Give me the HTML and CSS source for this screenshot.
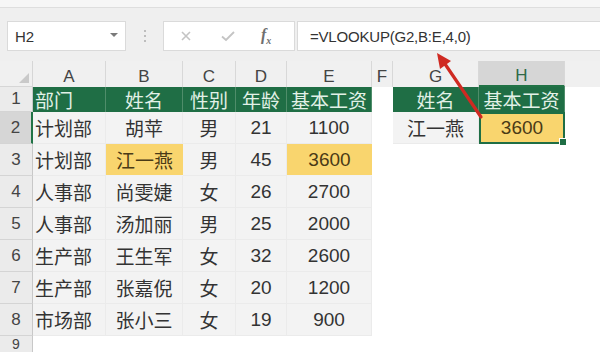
FILE: index.html
```html
<!DOCTYPE html>
<html>
<head>
<meta charset="utf-8">
<link rel="stylesheet" href="styles.css">
</head>
<body>
<div class="app">
  <div class="ribbon"></div>
  <div class="fbar">
    <div class="namebox"><span>H2</span><span class="dd"></span></div>
    <div class="grip"><i></i><i></i><i></i></div>
    <div class="fxbox">
      <svg class="ic" width="14" height="14" viewBox="0 0 14 14"><path d="M3 3 L11 11 M11 3 L3 11" stroke="#c4c4c4" stroke-width="1.6" fill="none"/></svg>
      <svg class="ic" width="16" height="14" viewBox="0 0 16 14"><path d="M2 7.5 L6 11 L14 3" stroke="#c4c4c4" stroke-width="1.8" fill="none"/></svg>
      <span class="fx">f<sub>x</sub></span>
    </div>
    <div class="finput">=VLOOKUP(G2,B:E,4,0)</div>
  </div>
  <div class="sheet">
    <div class="corner"></div>
    <div class="ch">A</div><div class="ch">B</div><div class="ch">C</div><div class="ch">D</div><div class="ch">E</div><div class="ch">F</div><div class="ch">G</div><div class="ch sel">H</div><div class="ch last"></div>

    <div class="rh">1</div>
    <div class="g left">部门</div><div class="g">姓名</div><div class="g">性别</div><div class="g">年龄</div><div class="g">基本工资</div><div class="w"></div><div class="g">姓名</div><div class="g">基本工资</div><div class="w"></div>

    <div class="rh sel">2</div>
    <div class="d left">计划部</div><div class="d">胡苹</div><div class="d">男</div><div class="d">21</div><div class="d">1100</div><div class="w"></div><div class="d">江一燕</div><div class="y cur">3600</div><div class="w"></div>

    <div class="rh">3</div>
    <div class="d left">计划部</div><div class="y">江一燕</div><div class="d">男</div><div class="d">45</div><div class="y">3600</div><div class="w"></div><div class="w"></div><div class="w"></div><div class="w"></div>

    <div class="rh">4</div>
    <div class="d left">人事部</div><div class="d">尚雯婕</div><div class="d">女</div><div class="d">26</div><div class="d">2700</div><div class="w"></div><div class="w"></div><div class="w"></div><div class="w"></div>

    <div class="rh">5</div>
    <div class="d left">人事部</div><div class="d">汤加丽</div><div class="d">男</div><div class="d">25</div><div class="d">2000</div><div class="w"></div><div class="w"></div><div class="w"></div><div class="w"></div>

    <div class="rh">6</div>
    <div class="d left">生产部</div><div class="d">王生军</div><div class="d">女</div><div class="d">32</div><div class="d">2600</div><div class="w"></div><div class="w"></div><div class="w"></div><div class="w"></div>

    <div class="rh">7</div>
    <div class="d left">生产部</div><div class="d">张嘉倪</div><div class="d">女</div><div class="d">20</div><div class="d">1200</div><div class="w"></div><div class="w"></div><div class="w"></div><div class="w"></div>

    <div class="rh">8</div>
    <div class="d left">市场部</div><div class="d">张小三</div><div class="d">女</div><div class="d">19</div><div class="d">900</div><div class="w"></div><div class="w"></div><div class="w"></div><div class="w"></div>

    <div class="rh r9">9</div>
    <div class="w"></div><div class="w"></div><div class="w"></div><div class="w"></div><div class="w"></div><div class="w"></div><div class="w"></div><div class="w"></div><div class="w"></div>
  </div>
  <svg class="arrow" width="600" height="352" viewBox="0 0 600 352">
    <line x1="481" y1="117" x2="445" y2="64" stroke="#cf2a22" stroke-width="3.2" stroke-linecap="round"/>
    <polygon points="437,53 451,61 440,69" fill="#cf2a22"/>
  </svg>
</div>
</body>
</html>
```
FILE: styles.css
```css
* { box-sizing: border-box; }
html, body { margin: 0; padding: 0; background: #fff; }
body { font-family: "Liberation Sans", "Noto Sans CJK SC", sans-serif; color: #333; }

.app { position: relative; width: 600px; height: 352px; overflow: hidden; }

.ribbon {
  height: 8px;
  background: #f6f6f6;
  border-bottom: 1px solid #dedede;
}

.fbar {
  height: 53px;
  background: #efefef;
  display: flex;
  align-items: flex-start;
  padding-top: 13px;
}
.namebox {
  margin-left: 7px;
  width: 119px;
  height: 30px;
  background: #fff;
  border: 1px solid #dadada;
  display: flex;
  align-items: center;
  justify-content: space-between;
  padding: 0 7px 0 7px;
  font-size: 15px;
  color: #333;
}
.dd {
  width: 0; height: 0;
  border-left: 4px solid transparent;
  border-right: 4px solid transparent;
  border-top: 4px solid #7a7a7a;
  margin-top: -2px;
}
.grip {
  width: 37px;
  height: 30px;
  display: flex;
  flex-direction: column;
  align-items: center;
  justify-content: center;
  gap: 3px;
}
.grip i { display: block; width: 2px; height: 2px; background: #bdbdbd; }
.fxbox {
  width: 132px;
  height: 30px;
  background: #fff;
  border: 1px solid #dadada;
  display: flex;
  align-items: center;
  padding-left: 15px;
}
.fxbox .ic:nth-child(1) { margin-right: 27px; }
.fxbox .ic:nth-child(2) { margin-right: 25px; }
.fx {
  font-family: "Liberation Serif", serif;
  font-style: italic;
  font-size: 16px;
  color: #6f6f6f;
  font-weight: bold;
}
.fx sub { font-size: 10px; }
.finput {
  margin-left: 2px;
  flex: 1;
  height: 30px;
  background: #fff;
  border: 1px solid #dadada;
  border-right: none;
  display: flex;
  align-items: center;
  padding-left: 12px;
  font-size: 15px;
  letter-spacing: -0.2px;
  color: #333;
}

.sheet {
  display: grid;
  grid-template-columns: 33px 73px 77px 53px 51px 85px 21px 86px 86px 1fr;
  grid-template-rows: 26px 25px repeat(7, 32px) 1fr;
  height: 291px;
  font-size: 19px;
}
.sheet > div { display: flex; align-items: center; justify-content: center; white-space: nowrap; }

.corner {
  background: #f0f0f0;
  border-right: 1px solid #d6d6d6;
  border-bottom: 1px solid #d6d6d6;
  position: relative;
}
.corner::after {
  content: "";
  position: absolute;
  right: 3px; bottom: 3px;
  width: 0; height: 0;
  border-left: 10px solid transparent;
  border-bottom: 10px solid #c9c9c9;
}
.ch {
  background: #f0f0f0;
  border-right: 1px solid #d8d8d8;
  font-size: 17px;
  color: #444;
  padding-top: 5px;
}
.ch.sel { background: #d6d6d6; border-bottom: 2px solid #217346; color: #2f6a48; }
.ch.last { border-right: none; }

.rh {
  background: #ebebeb;
  border-bottom: 1px solid #d4d4d4;
  border-right: 1px solid #c8c8c8;
  font-size: 17px;
  color: #444;
}
.rh.sel { background: #d6d6d6; border-right: 2px solid #217346; }
.rh.r9 { align-items: flex-start; padding-top: 1px; border-bottom: none; font-size: 14px; line-height: 14px; }

.g {
  background: #1f6e45;
  color: #e2f1e7;
  border-right: 1px solid #4f8d6a;
  font-size: 19px;
}
.left { justify-content: flex-start !important; padding-left: 2px; }

.d {
  background: #f3f3f3;
  border-right: 1px solid #ebebeb;
  border-bottom: 1px solid #ebebeb;
  color: #333;
}
.y {
  background: #f9d56e;
  color: #4a3a16;
  border-bottom: 1px solid #f2f2f2;
}
.w { background: #fff; }

.cur {
  border: 2px solid #1f6e45;
  position: relative;
}
.cur::after {
  content: "";
  position: absolute;
  right: -4px; bottom: -4px;
  width: 6px; height: 6px;
  background: #1f6e45;
  border: 1px solid #fff;
}

.arrow { position: absolute; left: 0; top: 0; pointer-events: none; }
```
